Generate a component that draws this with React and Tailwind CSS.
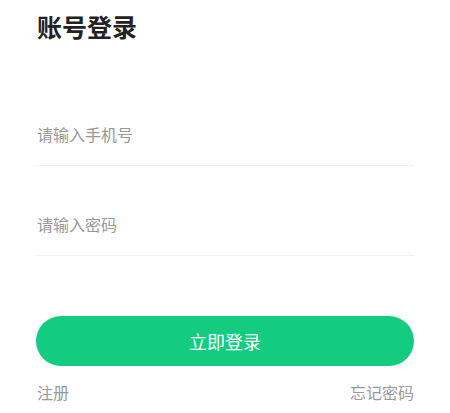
import React from "react";

const font = { fontFamily: '"Noto Sans CJK SC", "Noto Sans", sans-serif' };

const Field = ({ placeholder, type = "text", className = "" }) => (
  <div className={`h-[60px] pb-[4px] flex items-center border-b border-[#f2f2f2] ${className}`}>
    <input
      type={type}
      placeholder={placeholder}
      className="w-full pl-px bg-transparent outline-none text-base text-[#333] placeholder:text-[#999]"
    />
  </div>
);

export default function App() {
  return (
    <div className="w-full min-h-screen bg-white px-[36px] pt-[8px]" style={font}>
      <h1 className="text-[25px] font-bold text-[#222] leading-9 pl-px">账号登录</h1>
      <Field placeholder="请输入手机号" className="mt-[62px]" />
      <Field placeholder="请输入密码" type="password" className="mt-[30px]" />
      <button className="mt-[60px] w-full h-[50px] rounded-full bg-[#14cc7f] text-white text-lg">
        立即登录
      </button>
      <div className="mt-[14px] flex justify-between pl-px text-base text-[#999] leading-6">
        <span>注册</span>
        <span>忘记密码</span>
      </div>
    </div>
  );
}
